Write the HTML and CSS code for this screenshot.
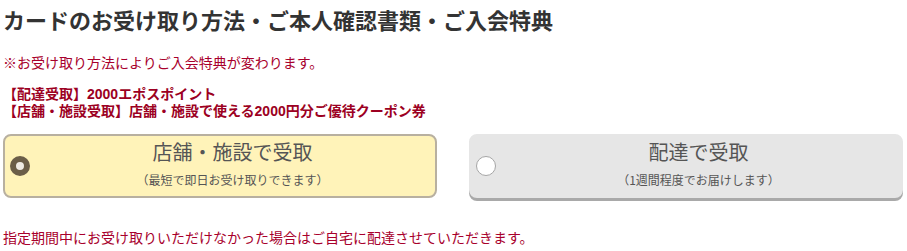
FILE: index.html
```html
<!DOCTYPE html>
<html lang="ja">
<head>
    <meta charset="UTF-8">
    <meta name="viewport" content="width=device-width, initial-scale=1.0">
    <title>カードのお受け取り方法</title>
    <link rel="stylesheet" href="styles.css">
</head>
<body>
    <h1 class="section-title">カードのお受け取り方法・ご本人確認書類・ご入会特典</h1>

    <p class="note">※お受け取り方法によりご入会特典が変わります。</p>

    <div class="benefits">
        <p>【配達受取】2000エポスポイント</p>
        <p>【店舗・施設受取】店舗・施設で使える2000円分ご優待クーポン券</p>
    </div>

    <div class="receive-options">
        <label class="option selected">
            <span class="radio"></span>
            <span class="option-text">
                <span class="option-name">店舗・施設で受取</span>
                <span class="option-sub">（最短で即日お受け取りできます）</span>
            </span>
        </label>
        <label class="option">
            <span class="radio"></span>
            <span class="option-text">
                <span class="option-name">配達で受取</span>
                <span class="option-sub">（1週間程度でお届けします）</span>
            </span>
        </label>
    </div>

    <p class="note bottom-note">指定期間中にお受け取りいただけなかった場合はご自宅に配達させていただきます。</p>
</body>
</html>
```

FILE: styles.css
```css
body {
    font-family: "Noto Sans CJK JP", "Noto Sans", sans-serif;
    margin: 0;
    padding: 4px 4px 0 3px;
    color: #333;
    background: #fff;
}
p {
    margin: 0;
}
.section-title {
    font-size: 22px;
    line-height: 30px;
    font-weight: bold;
    margin: 0;
    color: #333;
}
.note {
    margin-top: 18px;
    font-size: 14px;
    line-height: 20px;
    color: #a8002c;
}
.benefits {
    margin-top: 14px;
    font-family: "Liberation Sans", "Noto Sans CJK JP", sans-serif;
    font-size: 14px;
    line-height: 17px;
    font-weight: bold;
    color: #9c0022;
}
.receive-options {
    display: flex;
    gap: 32px;
    margin-top: 14px;
    width: 900px;
}
.option {
    flex: 1;
    display: flex;
    align-items: center;
    height: 64px;
    box-sizing: border-box;
    padding-left: 5px;
    border: 2px solid #e6e6e6;
    border-radius: 8px;
    background-color: #e6e6e6;
    box-shadow: 0 3px 0 #a9a9a9;
    cursor: pointer;
}
.option.selected {
    background-color: #fff3b9;
    border-color: #b8b0a0;
    box-shadow: none;
}
.radio {
    width: 20px;
    height: 20px;
    box-sizing: border-box;
    border-radius: 50%;
    background: #fff;
    border: 1px solid #a6a6a6;
    flex-shrink: 0;
}
.selected .radio {
    background: #efebe4;
    border: 6px solid #6b5e48;
}
.option-text {
    flex: 1;
    display: flex;
    flex-direction: column;
    align-items: center;
    color: #555;
}
.option-name {
    font-size: 20px;
    line-height: 26px;
    margin-top: -4px;
}
.option-sub {
    font-size: 12px;
    line-height: 18px;
    margin-top: 6px;
}
.bottom-note {
    margin-top: 29px;
}
```
